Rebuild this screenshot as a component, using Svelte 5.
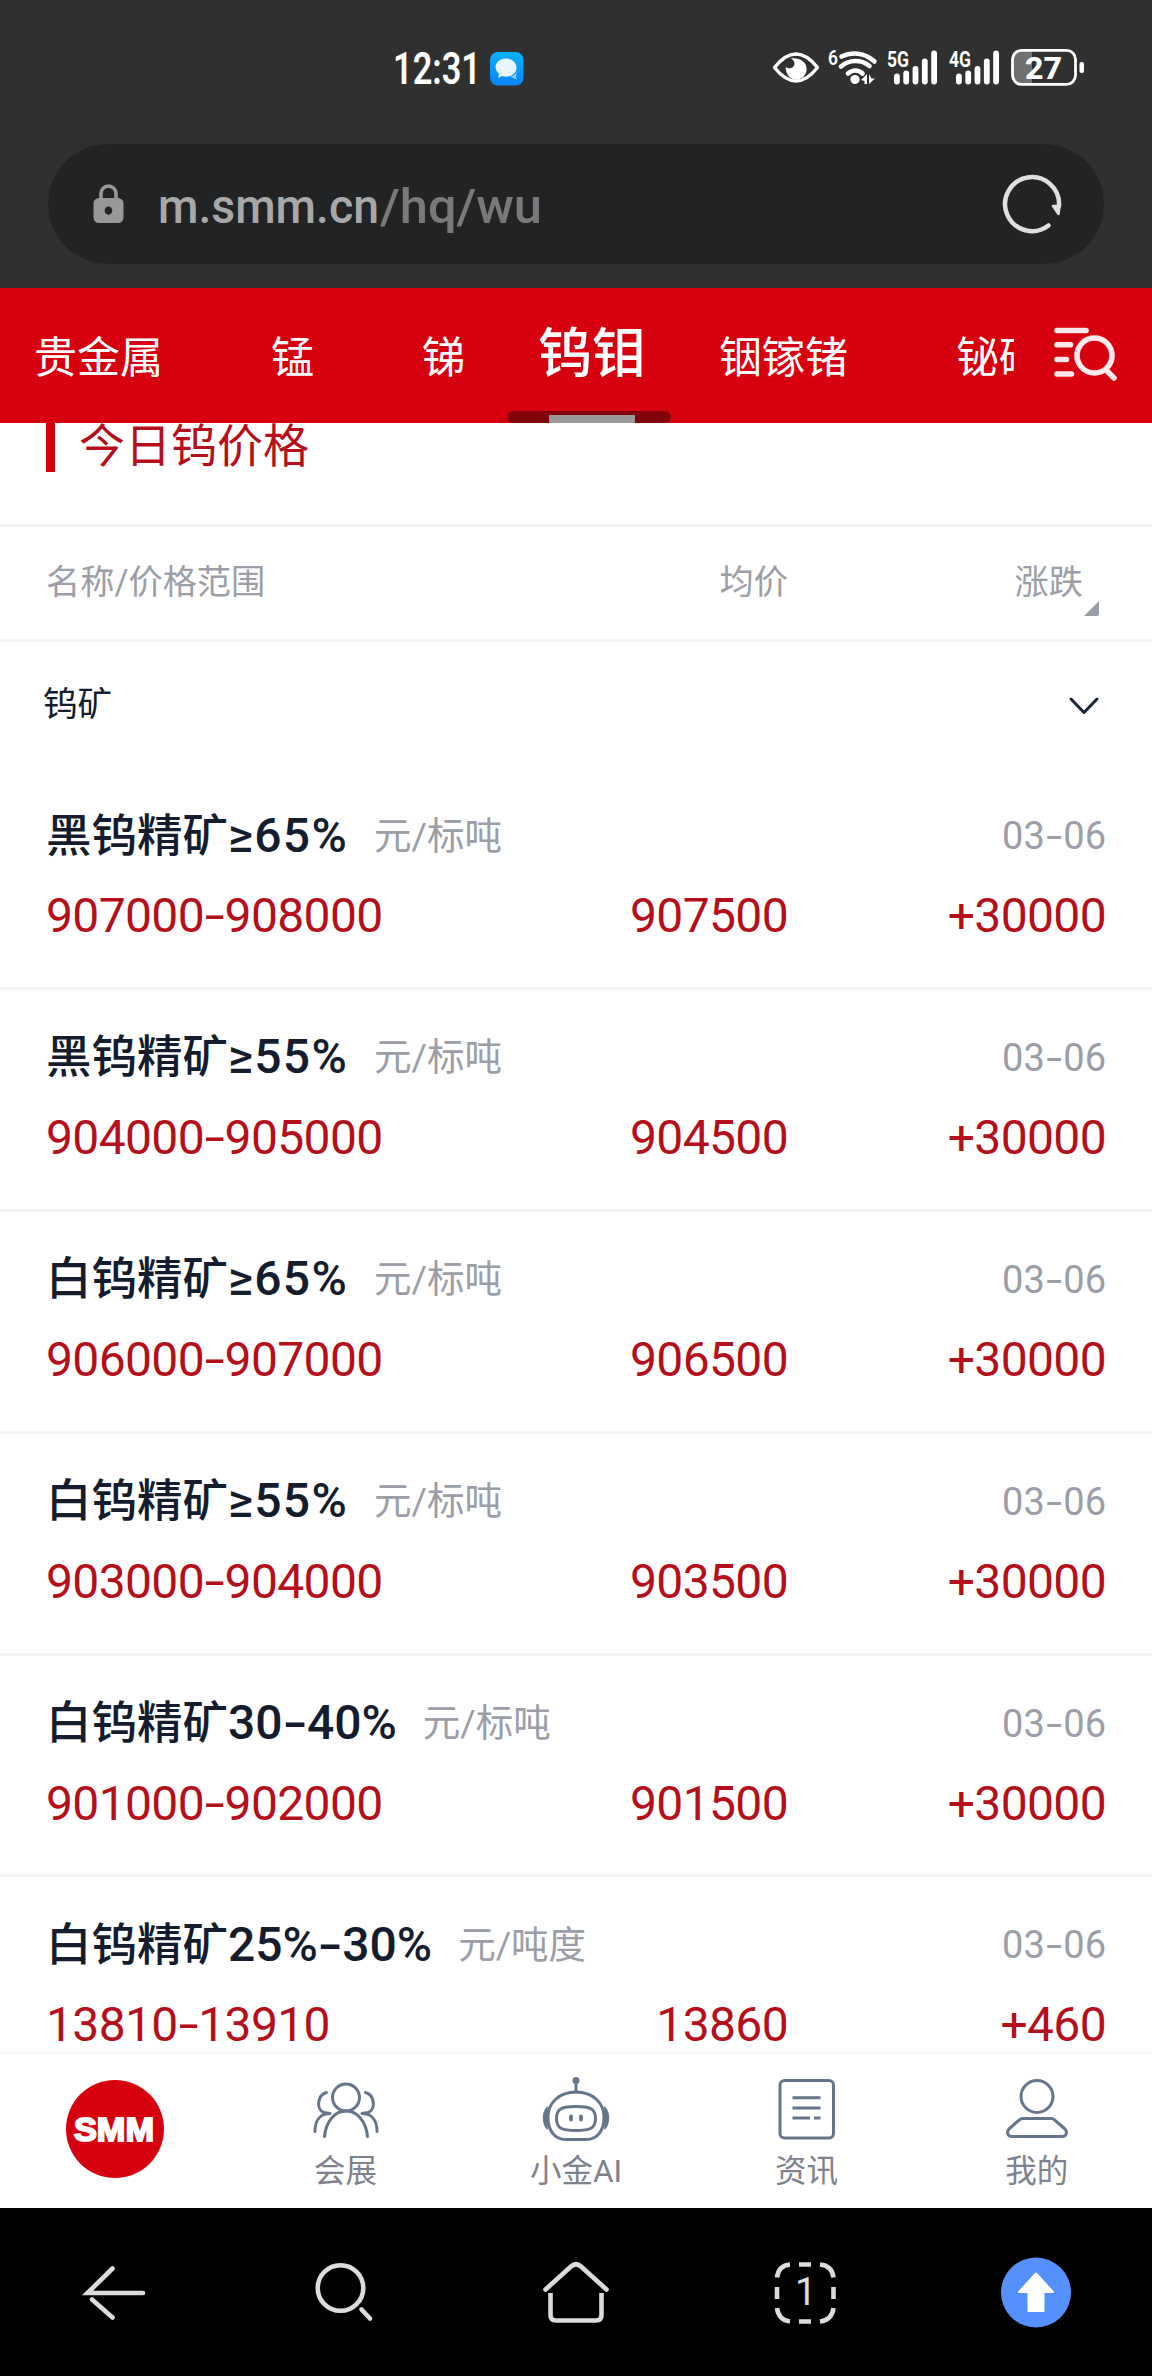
<script>
  const tabs = [
    { name: '贵金属' },
    { name: '锰' },
    { name: '锑' },
    { name: '钨钼', active: true },
    { name: '铟镓锗' },
    { name: '铋硒碲' }
  ];

  const prices = [
    { name: '黑钨精矿', grade: '≥65%', unit: '元/标吨', date: '03-06', range: '907000-908000', avg: '907500', change: '+30000' },
    { name: '黑钨精矿', grade: '≥55%', unit: '元/标吨', date: '03-06', range: '904000-905000', avg: '904500', change: '+30000' },
    { name: '白钨精矿', grade: '≥65%', unit: '元/标吨', date: '03-06', range: '906000-907000', avg: '906500', change: '+30000' },
    { name: '白钨精矿', grade: '≥55%', unit: '元/标吨', date: '03-06', range: '903000-904000', avg: '903500', change: '+30000' },
    { name: '白钨精矿', grade: '30-40%', unit: '元/标吨', date: '03-06', range: '901000-902000', avg: '901500', change: '+30000' },
    { name: '白钨精矿', grade: '25%-30%', unit: '元/吨度', date: '03-06', range: '13810-13910', avg: '13860', change: '+460' }
  ];

  const signalBars = [
    { x: 0, h: 11 },
    { x: 9.3, h: 14 },
    { x: 18.6, h: 18.5 },
    { x: 27.9, h: 26 },
    { x: 37.2, h: 34 }
  ];
</script>

<!-- the hyphen is drawn wider than the font's own -->
{#snippet dashed(text)}
  {#each text.split('-') as part, i}{#if i > 0}<span class="dash">-</span>{/if}{part}{/each}
{/snippet}

{#snippet signal(x, label)}
  <g transform="translate({x} 0)">
    <text x="0" y="37" font-size="22" font-weight="700" textLength="22" lengthAdjust="spacingAndGlyphs">{label}</text>
    {#each signalBars as bar}
      <rect x={bar.x + 7} y={54.5 - bar.h} width="5.8" height={bar.h} rx="2.9" />
    {/each}
  </g>
{/snippet}

<div class="phone">
  <header class="chrome">
    <div class="status">
      <div class="clock">
        <svg class="time" width="90" height="80" viewBox="0 0 90 80">
          <text x="1" y="54" font-size="44" font-weight="600" fill="#fff" textLength="88" lengthAdjust="spacingAndGlyphs">12:31</text>
        </svg>
        <svg width="34" height="34" viewBox="0 0 34 34">
          <defs>
            <linearGradient id="chat" x1="0" y1="0" x2="0" y2="1">
              <stop offset="0" stop-color="#0bb2fd" />
              <stop offset="1" stop-color="#0a83fb" />
            </linearGradient>
          </defs>
          <rect width="33.5" height="33.5" rx="8" fill="url(#chat)" />
          <path d="M20 24.5a7 7 0 0 0 7-8l-1 8.500.8 2.500-3.500-1.500z" fill="#8fd0fe" />
          <path d="M16 6.500c6 0 10.500 3.800 10.500 9s-4.500 9.200-10.500 9.200c-1.500 0-2.900-.2-4.100-.7L8.300 26l.6-4.200A9 9 0 0 1 5.500 15.500c0-5.200 4.500-9 10.500-9z" fill="#e6f5ff" />
        </svg>
      </div>
      <svg class="indicators" width="392" height="80" viewBox="0 0 392 80" fill="#fff">
        <path d="M14.500 37.500C22 28 29 24 36 24s14 4 21.500 13.500C50 47 43 51 36 51s-14-4-21.500-13.500z" fill="none" stroke="#fff" stroke-width="3.400" stroke-linejoin="round" />
        <path d="M31 28.500c4.500 2 5 8.500-.5 9.800-2 .4-3.500-.3-4.800-1.500 0 8 4.300 12.700 10.300 12.700 6.200 0 10.600-4.700 10.600-10.500 0-6.800-6.600-11.500-15.600-10.500z" />
        <text x="68" y="35" font-size="21" font-weight="600" textLength="10" lengthAdjust="spacingAndGlyphs">6</text>
        <g fill="none" stroke="#fff" stroke-width="4.600" stroke-linecap="round">
          <path d="M81.500 26.500c10-5 23-4 33 5" />
          <path d="M81 36.500c8-7 20-7.500 28.500-.5" />
          <path d="M88 43.500c4.500-4 10.500-4 14.500 0" />
        </g>
        <circle cx="95" cy="49.500" r="4.600" />
        <path d="M101 50l6-6v10h-2.500v-3zM109 44v10l6-5.500h-3.500z" />
        {@render signal(127, '5G')}
        {@render signal(189, '4G')}
        <path d="M261 20h11v34h-11a8 8 0 0 1-8-8V28a8 8 0 0 1 8-8z" fill="#707070" />
        <rect x="252.500" y="20.300" width="63" height="34" rx="9" fill="none" stroke="#fff" stroke-width="2.800" />
        <rect x="319.500" y="32" width="4.500" height="11" rx="2" />
        <text x="265" y="49" font-size="32" font-weight="800" textLength="37" lengthAdjust="spacingAndGlyphs">27</text>
      </svg>
    </div>
    <div class="address">
      <svg width="31" height="40" viewBox="0 0 31 40">
        <path d="M8 16V9.500a7.500 7.500 0 0 1 15 0V16" fill="none" stroke="#97989a" stroke-width="3.600" />
        <path d="M6 14h19a5.500 5.500 0 0 1 5.500 5.500v14A5.500 5.500 0 0 1 25 39H6a5.500 5.500 0 0 1-5.500-5.500v-14A5.500 5.500 0 0 1 6 14zm9.500 8.500c-2.200 0-3.800 1.700-3.800 4s1.600 4.200 3.800 4.200 3.800-1.900 3.800-4.200-1.600-4-3.800-4z" fill="#97989a" />
      </svg>
      <svg class="url" width="400" height="80" viewBox="0 0 400 80">
        <text x="0" y="58.500" font-size="48" font-weight="500" fill="#a8a8a8" textLength="221" lengthAdjust="spacingAndGlyphs">m.smm.cn</text>
        <text x="222" y="58.500" font-size="48" font-weight="500" fill="#79797b" textLength="162" lengthAdjust="spacingAndGlyphs">/hq/wu</text>
      </svg>
      <svg class="reload" width="64" height="64" viewBox="0 0 64 64" fill="none" stroke="#dfdfdf" stroke-width="4.500" stroke-linecap="round">
        <path d="M48.500 53.500A27 27 0 1 1 59 34" />
        <path d="M53 34h6.500l-1 8z" fill="#dfdfdf" stroke-width="2.500" stroke-linejoin="round" />
      </svg>
    </div>
  </header>

  <nav class="metals">
    <div class="strip">
      {#each tabs as tab}
        <div class="tab" class:active={tab.active}>{tab.name}</div>
      {/each}
    </div>
    <svg width="64" height="64" viewBox="0 0 64 64" fill="none" stroke="#ffe9ea" stroke-width="5.600" stroke-linecap="round">
      <path d="M3 6.500h29M3 20.800h13.500M3 35.500h9.500M3 50h14.500" />
      <circle cx="40.500" cy="31.500" r="17.500" />
      <path d="M52 46l8 8" />
    </svg>
  </nav>

  <main>
    <h1>今日钨价格</h1>
    <div class="columns">
      <span>名称/价格范围</span>
      <span class="num">均价</span>
      <span class="sort">涨跌
        <svg width="17" height="17" viewBox="0 0 17 17"><path d="M16 1v13a2 2 0 0 1-2 2H1z" fill="#9b9ea6" /></svg>
      </span>
    </div>
    <div class="group">
      <span>钨矿</span>
      <svg width="30" height="18" viewBox="0 0 30 18" fill="none" stroke="#1b2436" stroke-width="3" stroke-linecap="round" stroke-linejoin="round">
        <path d="M2 2l13 13.500L28 2" />
      </svg>
    </div>
    {#each prices as item}
      <section class="item">
        <div class="head">
          <span class="name">{item.name}<span class="grade" class:min={item.grade.startsWith('≥')}>{@render dashed(item.grade)}</span></span>
          <span class="unit">{item.unit}</span>
          <span class="date">{@render dashed(item.date)}</span>
        </div>
        <div class="values">
          <span>{@render dashed(item.range)}</span>
          <span class="num">{item.avg}</span>
          <span class="num">{item.change}</span>
        </div>
      </section>
    {/each}
  </main>

  <nav class="site">
    <div class="entry">
      <svg width="100" height="100" viewBox="0 0 100 100">
        <circle cx="50" cy="51" r="49" fill="#d7000f" />
        <text class="logo" x="9" y="63" font-size="34" textLength="80" lengthAdjust="spacingAndGlyphs">SMM</text>
      </svg>
    </div>
    <div class="entry">
      <svg class="icon" width="72" height="64" viewBox="0 0 72 64">
        <circle cx="36" cy="19.500" r="13.500" />
        <path d="M14.500 58.500C16 43 25 33 36 33s20 10 21.500 25.500" />
        <path d="M16.500 14.500C7 17 6 32 14 34.500l6 1M5 53.500C5 44 9 36 19 35.500" />
        <path d="M55.500 14.500C65 17 66 32 58 34.500l-6 1M67 53.500C67 44 63 36 53 35.500" />
      </svg>
      <span>会展</span>
    </div>
    <div class="entry">
      <svg class="icon" width="72" height="64" viewBox="0 0 72 64">
        <circle cx="36" cy="2.500" r="2" fill="#66758a" />
        <path d="M36 3v11" />
        <path d="M36 14c17 0 28 11 28 25 0 13-6 22.500-18 22.500H26C14 61.500 8 52 8 39c0-14 11-25 28-25z" />
        <path d="M36 28.500c14 0 19.500 2 19.500 12S50 52.500 36 52.500 16.500 50.500 16.500 40.500s5.500-12 19.500-12z" />
        <path d="M31 38.500v3M41 38.500v3" stroke-width="3.800" />
        <path d="M7 29c-5 5-5 17 0 22zM65 29c5 5 5 17 0 22z" fill="#66758a" stroke-width="1" />
      </svg>
      <span>小金AI</span>
    </div>
    <div class="entry">
      <svg class="icon" width="72" height="64" viewBox="0 0 72 64">
        <rect x="10" y="2.500" width="53.500" height="57.500" rx="4.500" />
        <path d="M22.500 19.800h28M22.500 30h28M22.500 40h17.500M44 40h6.500" stroke-linecap="butt" />
      </svg>
      <span>资讯</span>
    </div>
    <div class="entry">
      <svg class="icon" width="72" height="64" viewBox="0 0 72 64">
        <circle cx="36" cy="18.500" r="16" />
        <path d="M21.500 40.500h29c1.200 0 2.200.5 3 1.300L64 51c3 3.500 1 7.500-2.500 7.500h-51C7 58.500 5 54.500 8 51l10.500-9.200c.8-.8 1.800-1.300 3-1.300z" />
      </svg>
      <span>我的</span>
    </div>
  </nav>

  <footer class="browser">
    <svg width="72" height="72" viewBox="0 0 72 72">
      <path d="M64 36H8.500l25-24.500M13 42.500l20.500 18" />
    </svg>
    <svg width="72" height="72" viewBox="0 0 72 72">
      <circle cx="30.500" cy="31" r="22.800" />
      <path d="M51.500 52.500l8.500 9" />
    </svg>
    <svg width="72" height="72" viewBox="0 0 72 72">
      <path d="M5.500 32.500L31 9.500q5-4.500 10 0l25.500 23" />
      <path d="M10.500 36v22q0 5.500 5.500 5.500h40q5.500 0 5.500-5.500V36" stroke-linecap="butt" />
    </svg>
    <svg width="72" height="72" viewBox="0 0 72 72">
      <path stroke-linecap="butt" d="M7 20.500Q8.500 8.500 20 7.500M29 7.500h12M50 7.500q12 1 13.500 13M63.500 30v12M63.500 51q-1.500 12-13.500 13.500M41 64.500H29M20 64.500Q8.500 63 7 51M7 42V30" />
      <text class="count" x="25" y="47.500" font-size="38">1</text>
    </svg>
    <svg width="72" height="72" viewBox="0 0 72 72">
      <circle cx="35" cy="35.500" r="35" class="up" />
      <path class="arrow" d="M35 16.500l17 18.500H42.500v19h-15V35H18z" />
    </svg>
  </footer>
</div>

<style>
  :global(body) {
    background: #fff;
  }

  .phone {
    display: flex;
    flex-direction: column;
    width: 1152px;
    height: 2376px;
    overflow: hidden;
    font-family: Roboto, 'Noto Sans CJK SC', sans-serif;
    color: #141c2e;
    background: #fff;
  }

  svg {
    display: block;
    flex: none;
    overflow: visible;
  }

  .chrome {
    flex: none;
    height: 288px;
    background: #303030;
  }

  .status {
    display: flex;
    justify-content: space-between;
    height: 114px;
    padding: 30px 0 0 392px;
    box-sizing: border-box;
  }

  .clock {
    display: flex;
    align-items: center;
    gap: 8px;
    height: 77px;
  }

  .time {
    margin-top: 3px;
  }

  .address {
    display: flex;
    align-items: center;
    height: 120px;
    margin: 30px 48px 0;
    padding: 0 40px 0 45px;
    box-sizing: border-box;
    border-radius: 60px;
    background: #222325;
  }

  .url {
    margin-left: 34px;
  }

  .reload {
    margin-left: auto;
  }

  .metals {
    display: flex;
    align-items: center;
    justify-content: space-between;
    flex: none;
    height: 135px;
    padding-right: 34px;
    background: #d7000f;
  }

  .strip {
    display: flex;
    width: 1014px;
    height: 135px;
    overflow: hidden;
  }

  .tab {
    flex: none;
    padding: 0 54px;
    font-size: 43px;
    line-height: 141px;
    color: #fff;
  }

  .tab:first-child {
    margin-left: -20px;
  }

  .tab.active {
    position: relative;
    padding: 0 19px;
    font-size: 54px;
    line-height: 133px;
    font-weight: 500;
  }

  .tab.active::before {
    content: '';
    position: absolute;
    left: -12px;
    bottom: 0;
    width: 164px;
    height: 12px;
    border-radius: 6px;
    background: #81000a;
  }

  .tab.active::after {
    content: '';
    position: absolute;
    left: 30px;
    bottom: 0;
    width: 86px;
    height: 8px;
    background: #9a9a9a;
  }

  main {
    flex: 1;
    min-height: 0;
    overflow: hidden;
  }

  h1 {
    height: 49px;
    margin: 0 46px 52px;
    padding-left: 24px;
    border-left: 9px solid #d0000f;
    font-size: 46px;
    line-height: 47px;
    font-weight: 400;
    color: #b40f1b;
  }

  .columns,
  .values {
    display: grid;
    grid-template-columns: 1fr 300px 318px;
    padding: 0 46px;
  }

  .columns {
    height: 118px;
    box-sizing: border-box;
    border-top: 3px solid #f2f5f8;
    border-bottom: 3px solid #f2f5f8;
    font-size: 34.200px;
    line-height: 111px;
    color: #9b9ea6;
  }

  .num {
    text-align: right;
  }

  .sort {
    display: flex;
    justify-content: flex-end;
    padding-right: 6px;
  }

  .sort svg {
    margin-top: 73px;
  }

  .group {
    display: flex;
    align-items: center;
    justify-content: space-between;
    height: 126px;
    padding: 0 53px 0 43px;
    font-size: 34.500px;
  }

  .group span {
    margin-top: -9px;
  }

  .group svg {
    margin-top: 2px;
  }

  .item {
    height: 221.900px;
    padding-top: 34px;
    box-sizing: border-box;
    border-bottom: 3px solid #f2f5f8;
  }

  .head {
    display: flex;
    align-items: center;
    height: 68px;
    padding: 0 46px;
  }

  .name {
    margin-top: -9px;
    font-size: 45.500px;
    font-weight: 500;
  }

  .grade {
    font-size: 48px;
  }

  .grade.min {
    letter-spacing: 1.300px;
  }

  .unit {
    margin: -8px 0 0 26px;
    font-size: 37.500px;
    color: #9b9ea6;
  }

  .date {
    margin-left: auto;
    font-size: 38px;
    color: #9b9ea6;
  }

  .values {
    height: 92px;
    font-size: 48px;
    line-height: 92px;
    letter-spacing: -0.650px;
    color: #b40f1b;
  }

  .dash {
    display: inline-block;
    margin: 0 4px;
    transform: scaleX(1.5);
  }

  .site {
    display: flex;
    flex: none;
    height: 154px;
    background: #fff;
    box-shadow: 0 -1px 6px rgba(0, 0, 0, 0.06);
  }

  .entry {
    display: flex;
    flex-direction: column;
    align-items: center;
    flex: 1;
    padding-top: 24px;
    font-size: 31.500px;
    line-height: 46px;
    color: #7d828c;
  }

  .entry span {
    margin-top: 7px;
  }

  .icon {
    fill: none;
    stroke: #66758a;
    stroke-width: 3px;
    stroke-linecap: round;
    stroke-linejoin: round;
  }

  .logo {
    font-family: 'Liberation Sans', sans-serif;
    font-weight: 700;
    fill: #fff;
    stroke: #fff;
    stroke-width: 2px;
  }

  .browser {
    display: flex;
    align-items: center;
    justify-content: space-around;
    flex: none;
    height: 168px;
    padding-top: 1px;
    box-sizing: border-box;
    background: #000;
  }

  .browser svg {
    fill: none;
    stroke: #dcdcdc;
    stroke-width: 4.600px;
    stroke-linecap: round;
  }

  .browser .count {
    fill: #dcdcdc;
    stroke: none;
  }

  .browser .up {
    fill: #5590ff;
    stroke: none;
  }

  .browser .arrow {
    fill: #fff;
    stroke: #fff;
    stroke-width: 2px;
    stroke-linejoin: round;
  }
</style>
